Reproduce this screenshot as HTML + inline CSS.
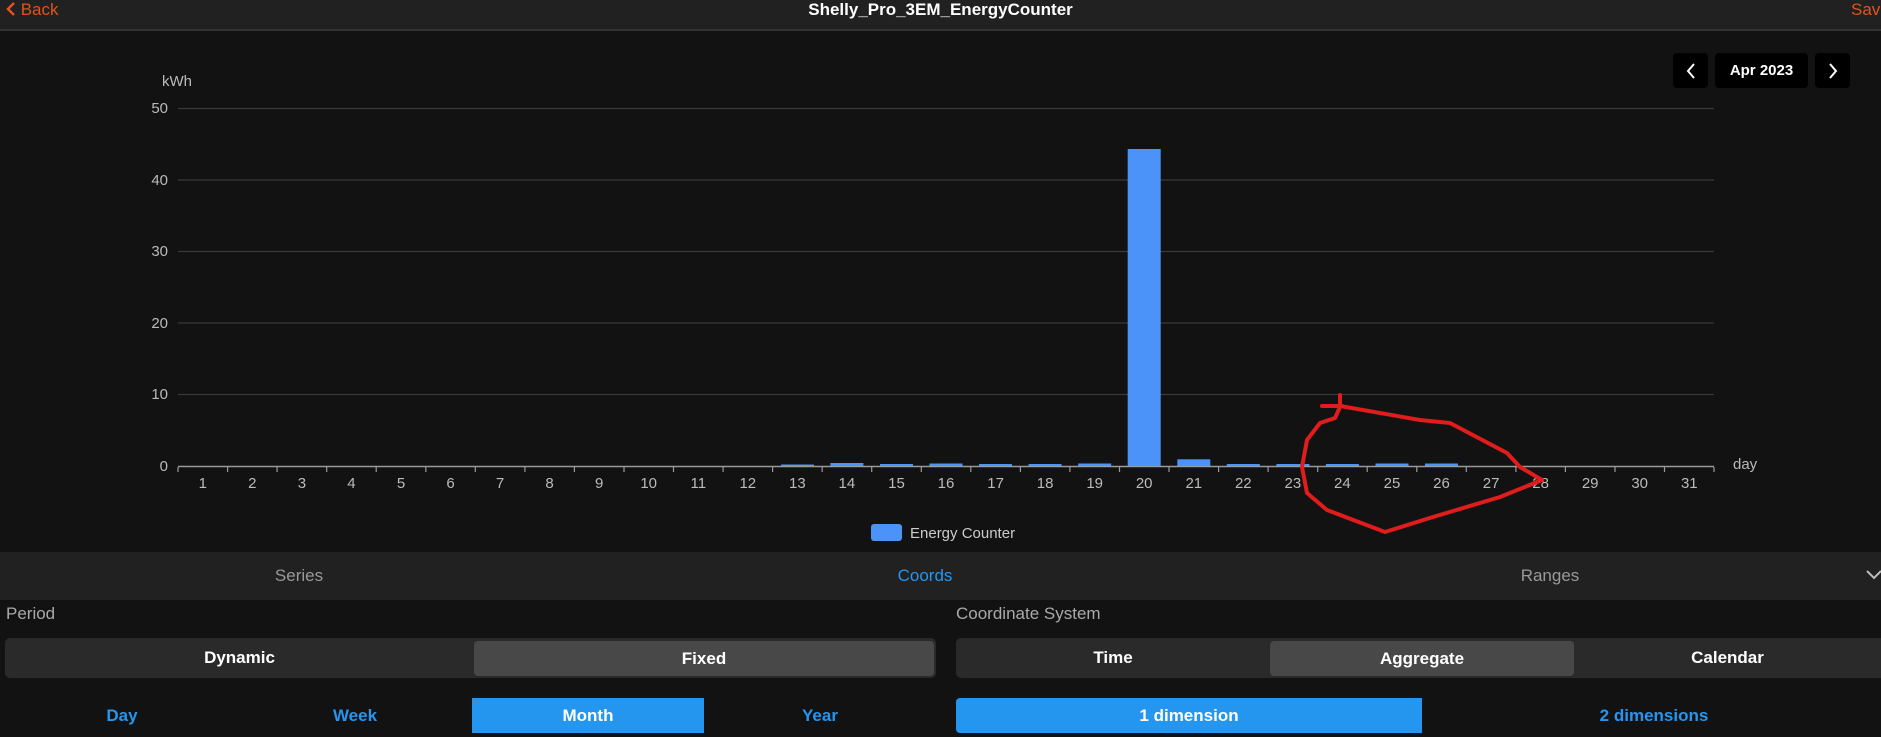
<!DOCTYPE html>
<html><head><meta charset="utf-8"><style>
*{margin:0;padding:0;box-sizing:border-box}
body{width:1881px;height:737px;background:#121212;font-family:"Liberation Sans",sans-serif;position:relative;overflow:hidden;color:#fff}
.a{position:absolute}
.hdr{left:0;top:0;width:1881px;height:31px;background:#212121;border-bottom:2px solid #333}
.c{display:flex;align-items:center;justify-content:center}
.bt{font-weight:bold;font-size:17px;color:#fff}
.bl{font-size:17px;color:#2496f0}
</style></head><body>
<div class="a hdr"></div>
<div class="a" style="left:6px;top:0;font-size:17px;color:#e0541c;line-height:20px"><svg width="10" height="14" viewBox="0 0 10 14" style="vertical-align:-1px"><path d="M8 1L2 7l6 6" stroke="#e0541c" stroke-width="2.5" fill="none"/></svg> Back</div>
<div class="a" style="left:0;width:1881px;top:0;text-align:center;font-size:17px;font-weight:bold;line-height:20px">Shelly_Pro_3EM_EnergyCounter</div>
<div class="a" style="left:1851px;top:0;font-size:17px;color:#e0541c;line-height:20px">Save</div>

<div class="a c" style="left:1673px;top:53px;width:35px;height:35px;background:#000;border-radius:4px"><svg width="12" height="18"><path d="M9 2L3 9l6 7" stroke="#fff" stroke-width="2" fill="none"/></svg></div>
<div class="a c" style="left:1715px;top:53px;width:93px;height:35px;background:#000;border-radius:4px;font-weight:bold;font-size:15px">Apr 2023</div>
<div class="a c" style="left:1815px;top:53px;width:35px;height:35px;background:#000;border-radius:4px"><svg width="12" height="18"><path d="M3 2l6 7-6 7" stroke="#fff" stroke-width="2" fill="none"/></svg></div>

<svg class="a" style="left:0;top:0" width="1881" height="560" font-family="Liberation Sans, sans-serif" font-size="15" fill="#bbb">
<text x="162" y="86" fill="#bbb">kWh</text>
<g stroke="#3a3a3a" stroke-width="1.2">
<line x1="178" x2="1714" y1="108.5" y2="108.5"/><line x1="178" x2="1714" y1="180" y2="180"/><line x1="178" x2="1714" y1="251.5" y2="251.5"/><line x1="178" x2="1714" y1="323" y2="323"/><line x1="178" x2="1714" y1="394.5" y2="394.5"/>
</g>
<g text-anchor="end"><text x="168" y="113">50</text><text x="168" y="185">40</text><text x="168" y="256">30</text><text x="168" y="328">20</text><text x="168" y="399">10</text><text x="168" y="471">0</text></g>
<g fill="#4b93f8">
<rect x="781" y="464.5" width="33" height="1.5"/><rect x="830.4" y="463" width="33" height="3"/><rect x="880" y="464" width="33" height="2"/><rect x="929.5" y="463.5" width="33" height="2.5"/><rect x="979" y="464" width="33" height="2"/><rect x="1028.6" y="464" width="33" height="2"/><rect x="1078.2" y="463.5" width="33" height="2.5"/><rect x="1127.7" y="149" width="33" height="317"/><rect x="1177.3" y="459.3" width="33" height="6.7"/><rect x="1226.8" y="464" width="33" height="2"/><rect x="1276.4" y="464" width="33" height="2"/><rect x="1325.9" y="464" width="33" height="2"/><rect x="1375.5" y="463.5" width="33" height="2.5"/><rect x="1425" y="463.5" width="33" height="2.5"/>
</g>
<line x1="178" x2="1714" y1="466.5" y2="466.5" stroke="#9a9a9a" stroke-width="1.5"/>
<path stroke="#9a9a9a" stroke-width="1.2" d="M178 467v5M227.6 467v5M277.1 467v5M326.7 467v5M376.2 467v5M425.8 467v5M475.3 467v5M524.9 467v5M574.4 467v5M624 467v5M673.5 467v5M723.1 467v5M772.6 467v5M822.2 467v5M871.7 467v5M921.3 467v5M970.8 467v5M1020.4 467v5M1069.9 467v5M1119.5 467v5M1169 467v5M1218.6 467v5M1268.1 467v5M1317.7 467v5M1367.2 467v5M1416.8 467v5M1466.3 467v5M1515.9 467v5M1565.4 467v5M1615 467v5M1664.5 467v5M1714 467v5"/>
<g text-anchor="middle">
<text x="202.8" y="488">1</text><text x="252.3" y="488">2</text><text x="301.9" y="488">3</text><text x="351.4" y="488">4</text><text x="401" y="488">5</text><text x="450.5" y="488">6</text><text x="500.1" y="488">7</text><text x="549.6" y="488">8</text><text x="599.2" y="488">9</text><text x="648.7" y="488">10</text><text x="698.3" y="488">11</text><text x="747.8" y="488">12</text><text x="797.4" y="488">13</text><text x="846.9" y="488">14</text><text x="896.5" y="488">15</text><text x="946" y="488">16</text><text x="995.6" y="488">17</text><text x="1045.1" y="488">18</text><text x="1094.7" y="488">19</text><text x="1144.2" y="488">20</text><text x="1193.8" y="488">21</text><text x="1243.3" y="488">22</text><text x="1292.9" y="488">23</text><text x="1342.4" y="488">24</text><text x="1392" y="488">25</text><text x="1441.5" y="488">26</text><text x="1491.1" y="488">27</text><text x="1540.6" y="488">28</text><text x="1590.2" y="488">29</text><text x="1639.7" y="488">30</text><text x="1689.3" y="488">31</text>
</g>
<text x="1733" y="469">day</text>
<rect x="871" y="524" width="31" height="17" rx="3" fill="#4b93f8"/>
<text x="910" y="538" fill="#ccc">Energy Counter</text>
<path d="M1322 406H1342M1340 395V407L1335 418L1320 423L1307 440L1302 467L1307 493L1327 510L1385 532L1433 517L1500 497L1542 480L1520 467L1507 453L1450 423L1420 420L1340 406" stroke="#e01c1c" stroke-width="4" fill="none" stroke-linejoin="round" stroke-linecap="round"/>
</svg>

<div class="a" style="left:0;top:552px;width:1881px;height:48px;background:#212121"></div>
<div class="a c" style="left:199px;width:200px;top:552px;height:48px;font-size:17px;color:#999">Series</div>
<div class="a c" style="left:825px;width:200px;top:552px;height:48px;font-size:17px;color:#2496f0">Coords</div>
<div class="a c" style="left:1450px;width:200px;top:552px;height:48px;font-size:17px;color:#999">Ranges</div>
<svg class="a" style="left:1865px;top:569px" width="16" height="12"><path d="M2 2l7 7 7-7" stroke="#bbb" stroke-width="2" fill="none"/></svg>

<div class="a" style="left:6px;top:604px;font-size:17px;color:#aaa">Period</div>
<div class="a" style="left:956px;top:604px;font-size:17px;color:#aaa">Coordinate System</div>

<div class="a" style="left:5px;top:638px;width:931px;height:40px;background:#2a2a2a;border-radius:5px"></div>
<div class="a c bt" style="left:5px;top:638px;width:469px;height:40px">Dynamic</div>
<div class="a c bt" style="left:474px;top:641px;width:460px;height:35px;background:#484848;border-radius:4px">Fixed</div>

<div class="a" style="left:956px;top:638px;width:930px;height:40px;background:#2a2a2a;border-radius:5px"></div>
<div class="a c bt" style="left:956px;top:638px;width:314px;height:40px">Time</div>
<div class="a c bt" style="left:1270px;top:641px;width:304px;height:35px;background:#484848;border-radius:4px">Aggregate</div>
<div class="a c bt" style="left:1574px;top:638px;width:307px;height:40px">Calendar</div>

<div class="a c bl" style="left:0;top:698px;width:244px;height:35px;font-weight:bold">Day</div>
<div class="a c bl" style="left:238px;top:698px;width:234px;height:35px;font-weight:bold">Week</div>
<div class="a c bt" style="left:472px;top:698px;width:232px;height:35px;background:#2496f0">Month</div>
<div class="a c bl" style="left:704px;top:698px;width:232px;height:35px;font-weight:bold">Year</div>
<div class="a c bt" style="left:956px;top:698px;width:466px;height:35px;background:#2496f0;border-radius:4px 0 0 4px">1 dimension</div>
<div class="a c bl" style="left:1422px;top:698px;width:464px;height:35px;font-weight:bold">2 dimensions</div>
</body></html>
